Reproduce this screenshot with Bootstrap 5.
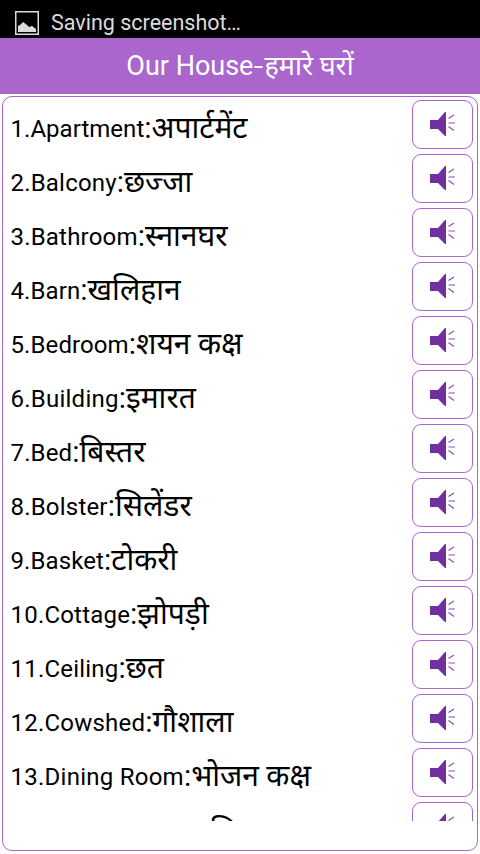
<!DOCTYPE html>
<html lang="hi">
<head>
<meta charset="utf-8">
<meta name="viewport" content="width=device-width, initial-scale=1">
<title>Our House</title>
<link href="https://cdn.jsdelivr.net/npm/bootstrap@5.3.0/dist/css/bootstrap.min.css" rel="stylesheet">
<style>
body{font-family:Roboto,"Noto Sans",sans-serif;color:#000}
.screen{height:854px}
.status{height:38px;padding:5px 0 0 15px;background:#000;color:#dcdcdc;font-size:21.500px;line-height:36px}
.status svg{margin-top:6px;margin-right:12px}
.title-bar{height:56px;background:#aa66cc;font-size:27px;line-height:56px}
.dash{display:inline-block;width:11px;transform:scaleX(1.25)}
.panel{height:755px;margin:2px 2px 0;border:1px solid #aa66cc;border-radius:10px;padding:3px 4px 0 8px}
.words{height:721px}
.word{height:54px}
.en{font-size:24px;line-height:58px;margin-left:-.5px}
.hi{font-size:30px;line-height:56px}
.word:last-child .hi{line-height:59px}
.speak{width:61px;height:49px;border:1px solid #aa66cc;border-radius:9px;background:#fff}
</style>
</head>
<body>
<svg class="d-none"><symbol id="speaker" viewBox="0 0 26 26"><path d="M0 8h8l7-8h1v24h-1l-7-7H0z" fill="#7030a0"/><path d="M18.500 6.500l5.500-3.500M18.500 11h6.500M18.500 14.500l5.500 4" stroke="#8b52b2" stroke-width="1.2" fill="none"/></symbol></svg>
<div class="screen overflow-hidden">
<header class="status d-flex align-items-start"><svg width="24" height="24" viewBox="0 0 24 24"><path d="M.75.75h22.500v22.500H.75z" fill="none" stroke="#dcdcdc" stroke-width="1.500"/><path d="M3 21v-6l2-1 3-3 4 3 2 2 3-1 4 3v3z" fill="#dcdcdc"/></svg><span>Saving screenshot…</span></header>
<h1 class="title-bar m-0 fw-normal text-white text-center">Our House<span class="dash">-</span>हमारे घरों</h1>
<main class="panel"><div class="words overflow-hidden" id="words"></div></main>
</div>
<script src="https://cdn.jsdelivr.net/npm/bootstrap@5.3.0/dist/js/bootstrap.bundle.min.js"></script>
<script>
// English word, Hindi word, letter spacing of the English word in px
const words=[["Apartment","अपार्टमेंट",.03],["Balcony","छज्जा",.2],["Bathroom","स्नानघर",.2],["Barn","खलिहान",.1],["Bedroom","शयन कक्ष",.1],["Building","इमारत",.24],["Bed","बिस्तर",.15],["Bolster","सिलेंडर",.2],["Basket","टोकरी",.1],["Cottage","झोपड़ी",.2],["Ceiling","छत",.2],["Cowshed","गौशाला",.22],["Dining Room","भोजन कक्ष",.25],["Drawing Room","चित्र",.2]];
document.getElementById("words").innerHTML=words.map(([e,h,s],i)=>`<div class="word d-flex justify-content-between align-items-start"><div class="d-flex text-nowrap"><span class="en" style="letter-spacing:${s}px">${i+1}.${e}</span><span class="hi">:${h}</span></div><button class="speak d-flex align-items-center justify-content-center p-0" aria-label="${e}"><svg width="26" height="26"><use href="#speaker"/></svg></button></div>`).join("");
</script>
</body>
</html>
